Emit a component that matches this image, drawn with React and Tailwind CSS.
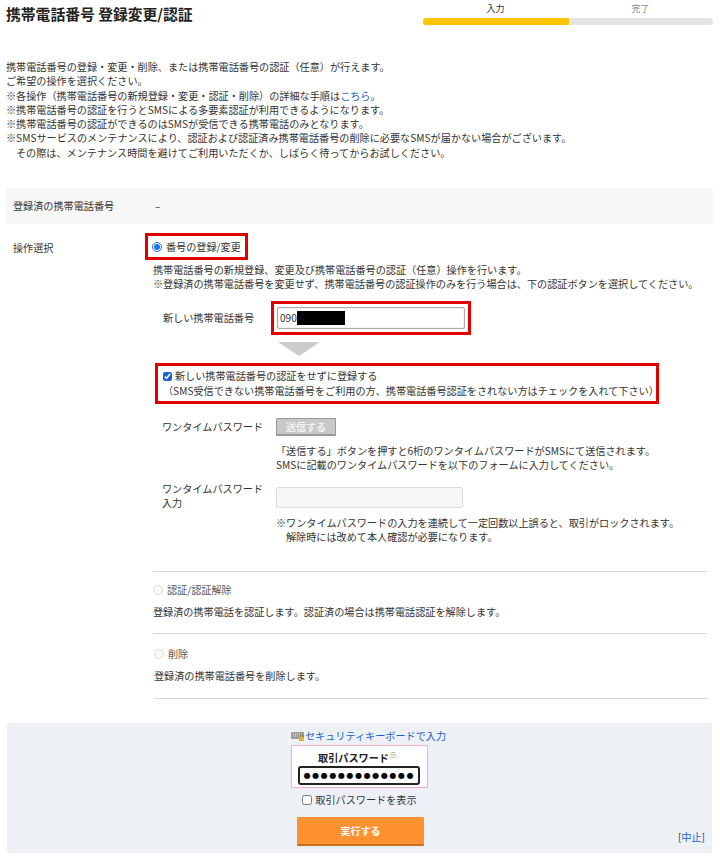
import React from 'react';

const FONT = "font-['Noto_Sans_CJK_JP','Noto_Sans',sans-serif]";

const KeyboardIcon = () => (
  <svg width="14" height="11" viewBox="0 0 14 11" className="shrink-0">
    <rect x="0" y="1" width="13" height="7" rx="1" fill="#9a9a9a" />
    <path d="M2 3h9M2 5h9" stroke="#e6e6e6" strokeWidth="1" strokeDasharray="1 1" />
    <rect x="8" y="6" width="5" height="4" fill="#d9b23a" />
    <path d="M9 6V5a1.5 1.5 0 0 1 3 0v1" fill="none" stroke="#8a6d1a" strokeWidth="0.8" />
  </svg>
);

const App = () => {
  return (
    <div className={`w-[720px] h-[858px] overflow-hidden bg-white text-[#333] text-[10.15px] leading-[14px] ${FONT}`}>
      {/* Header */}
      <div className="flex justify-between h-[34px] pl-[6px] pr-[7px] pt-[3px]">
        <h1 className="text-[14.8px] leading-[22px] font-bold text-[#222]">携帯電話番号 登録変更/認証</h1>
        <div className="w-[290px]">
          <div className="flex text-[9px] leading-[12px]">
            <span className="w-1/2 text-center">入力</span>
            <span className="w-1/2 text-center text-[#888]">完了</span>
          </div>
          <div className="flex h-[7px] mt-[3px] rounded-full overflow-hidden bg-[#e4e4e4]">
            <div className="w-[146px] bg-[#ffc400]" />
          </div>
        </div>
      </div>

      {/* Intro */}
      <div className="mt-[26px] pl-[6px] leading-[14.3px]">
        <p>携帯電話番号の登録・変更・削除、または携帯電話番号の認証（任意）が行えます。</p>
        <p>ご希望の操作を選択ください。</p>
        <p>※各操作（携帯電話番号の新規登録・変更・認証・削除）の詳細な手順は<a className="text-[#1a5fc8]">こちら</a>。</p>
        <p>※携帯電話番号の認証を行うとSMSによる多要素認証が利用できるようになります。</p>
        <p>※携帯電話番号の認証ができるのはSMSが受信できる携帯電話のみとなります。</p>
        <p>※SMSサービスのメンテナンスにより、認証および認証済み携帯電話番号の削除に必要なSMSが届かない場合がございます。</p>
        <p className="pl-[10px]">その際は、メンテナンス時間を避けてご利用いただくか、しばらく待ってからお試しください。</p>
      </div>

      {/* Registered number */}
      <div className="mt-[28px] mx-[6px] w-[707px] h-[36px] flex items-center bg-[#f7f7f7]">
        <div className="w-[149px] pl-[7px]">登録済の携帯電話番号</div>
        <div>–</div>
      </div>

      {/* Operation */}
      <div className="flex">
        <div className="w-[145px] pl-[13px] pt-[17px]">操作選択</div>
        <div className="w-[568px] pt-[9px]">
          <label className="w-[103px] h-[27px] flex items-center gap-[4px] pl-[4px] border-[3px] border-[#e00000]">
            <input type="radio" name="op" defaultChecked className="w-[10px] h-[10px] m-0 accent-[#1a73e8]" />
            <span>番号の登録/変更</span>
          </label>
          <div className="mt-[3px] ml-[8px]">
            <p>携帯電話番号の新規登録、変更及び携帯電話番号の認証（任意）操作を行います。</p>
            <p className="whitespace-nowrap">※登録済の携帯電話番号を変更せず、携帯電話番号の認証操作のみを行う場合は、下の認証ボタンを選択してください。</p>
          </div>

          <div className="flex items-center mt-[10px]">
            <div className="w-[126px] pl-[18px]">新しい携帯電話番号</div>
            <div className="w-[200px] h-[34px] flex items-center justify-center border-[3px] border-[#e00000]">
              <div className="w-[188px] h-[22px] flex items-center pl-[2px] bg-white border border-[#aaa] rounded-[2px] shadow-[inset_0_0_1px_#888]">
                <span>090</span>
                <span className="w-[48px] h-[14px] bg-black" />
              </div>
            </div>
          </div>

          <div className="ml-[133px] mt-[7px] w-0 h-0 border-x-[21px] border-x-transparent border-t-[14px] border-t-[#cccccc]" />

          <div className="ml-[10px] mt-[7px] w-[504px] h-[41px] pt-[3px] pl-[5px] border-[3px] border-[#e00000]">
            <label className="flex items-center gap-[3px]">
              <input type="checkbox" defaultChecked className="w-[9px] h-[9px] m-0 accent-[#1a5fd8]" />
              <span>新しい携帯電話番号の認証をせずに登録する</span>
            </label>
            <p className="mt-[1px] whitespace-nowrap">（SMS受信できない携帯電話番号をご利用の方、携帯電話番号認証をされない方はチェックを入れて下さい）</p>
          </div>

          <div className="mt-[14px] flex items-center">
            <div className="w-[131px] pl-[17px]">ワンタイムパスワード</div>
            <button disabled className="w-[60px] h-[18px] rounded-[1px] bg-[#c8c8c8] border border-b-2 border-[#9a9a9a] text-[#f2f2f2] font-bold text-[10px] leading-[14px]">送信する</button>
          </div>
          <div className="mt-[8px] ml-[131px]">
            <p>「送信する」ボタンを押すと6桁のワンタイムパスワードがSMSにて送信されます。</p>
            <p>SMSに記載のワンタイムパスワードを以下のフォームに入力してください。</p>
          </div>

          <div className="mt-[10px] flex">
            <div className="w-[131px] pl-[17px]">ワンタイムパスワード<br />入力</div>
            <div className="w-[187px] h-[21px] mt-[5px] bg-[#f7f7f7] border border-[#dcdcdc] rounded-[2px]" />
          </div>
          <div className="mt-[6px] ml-[131px]">
            <p>※ワンタイムパスワードの入力を連続して一定回数以上誤ると、取引がロックされます。</p>
            <p className="pl-[10px]">解除時には改めて本人確認が必要になります。</p>
          </div>

          <div className="mt-[27px] ml-[8px] mr-[6px] border-t border-[#d8d8d8]" />
          <label className="mt-[11px] ml-[8px] flex items-center gap-[4px] text-[#555]">
            <input type="radio" name="op" disabled className="w-[10px] h-[10px] m-0 opacity-70" />
            <span>認証/認証解除</span>
          </label>
          <p className="mt-[8px] ml-[8px]">登録済の携帯電話を認証します。認証済の場合は携帯電話認証を解除します。</p>

          <div className="mt-[14px] ml-[8px] mr-[6px] border-t border-[#d8d8d8]" />
          <label className="mt-[13px] ml-[9px] flex items-center gap-[4px] text-[#555]">
            <input type="radio" name="op" disabled className="w-[10px] h-[10px] m-0 opacity-70" />
            <span>削除</span>
          </label>
          <p className="mt-[8px] ml-[9px]">登録済の携帯電話番号を削除します。</p>

          <div className="mt-[15px] ml-[9px] mr-[5px] border-t border-[#d8d8d8]" />
        </div>
      </div>

      {/* Password panel */}
      <div className="mt-[24px] mx-[7px] w-[705px] h-[130px] bg-[#edf1f6] grid grid-cols-[1fr_auto_1fr]">
        <div />
        <div className="flex flex-col items-center pt-[6px]">
          <a className="flex items-center ml-[18px] whitespace-nowrap text-[#1a5fc8]">
            <KeyboardIcon />
            <span>セキュリティキーボードで入力</span>
          </a>
          <div className="mt-[2px] w-[137px] h-[43px] bg-white border border-[#f4b0ba] flex flex-col items-center">
            <div className="mt-[5px] h-[14px] font-bold text-[#222] pr-[4px]">
              取引パスワード<sup className="text-[8px] font-normal text-[#777] leading-none">※</sup>
            </div>
            <div className="mt-[1px] w-[122px] h-[19px] bg-white border-2 border-[#222] rounded-[3px] flex items-center justify-center overflow-hidden text-black text-[8px] tracking-[1.6px] font-['DejaVu_Sans',sans-serif]">
              ●●●●●●●●●●●●●
            </div>
          </div>
          <label className="mt-[5px] flex items-center gap-[3px]">
            <input type="checkbox" className="w-[10px] h-[10px] m-0" />
            <span>取引パスワードを表示</span>
          </label>
          <button className="mt-[10px] ml-[2px] w-[127px] h-[29px] bg-[#ff9130] border-b-2 border-[#c87020] text-white font-bold text-[10px] rounded-[1px]">実行する</button>
        </div>
        <div className="self-end justify-self-end pr-[7px] pb-[9px]">
          <span>[</span><a className="text-[#1a5fc8]">中止</a><span>]</span>
        </div>
      </div>
    </div>
  );
};

export default App;
